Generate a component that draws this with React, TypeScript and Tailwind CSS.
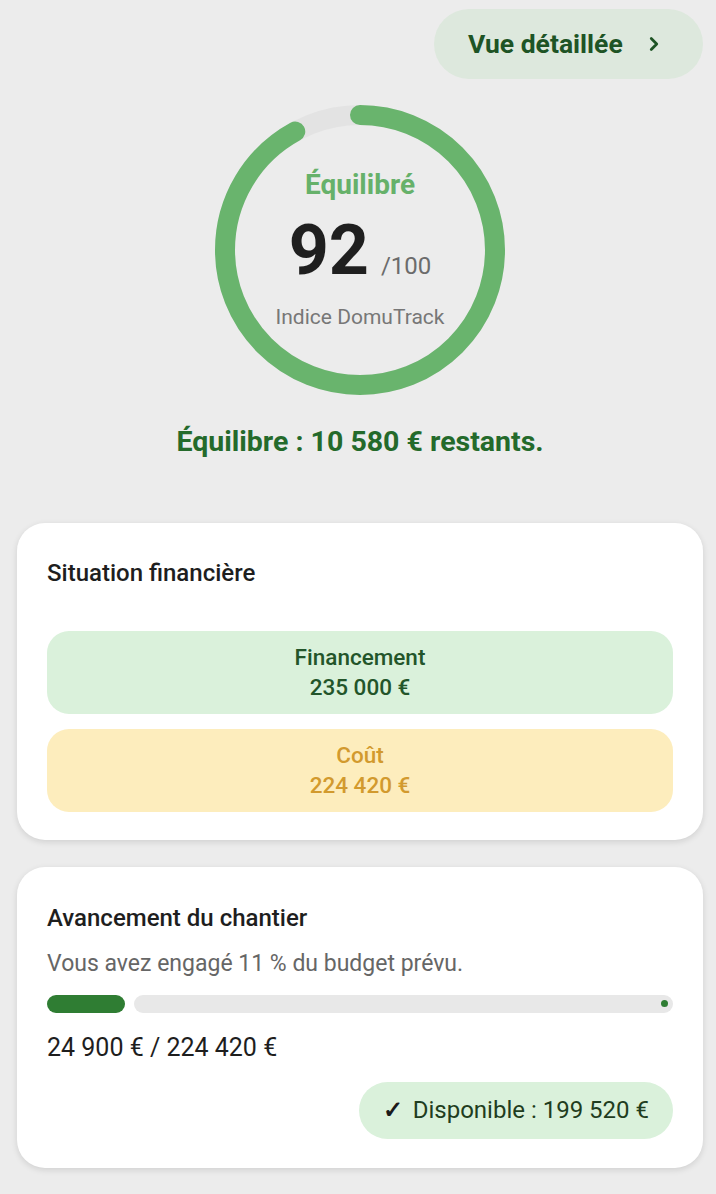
import React from 'react';

const font = { fontFamily: 'Roboto, "Noto Sans", sans-serif' };

const ScoreRing: React.FC<{ value: number }> = ({ value }) => {
  const r = 135;
  const c = 2 * Math.PI * r;
  return (
    <div className="relative w-[290px] h-[290px]">
      <svg width="290" height="290" viewBox="0 0 290 290" className="absolute inset-0">
        <circle cx="145" cy="145" r={r} fill="none" stroke="#e3e3e3" strokeWidth="20" />
        <circle
          cx="145"
          cy="145"
          r={r}
          fill="none"
          stroke="#69b46d"
          strokeWidth="20"
          strokeLinecap="round"
          strokeDasharray={`${(c * value) / 100} ${c}`}
          transform="rotate(-90 145 145)"
        />
      </svg>
      <div className="absolute inset-0 flex flex-col items-center justify-center">
        <div className="text-[28px] font-bold text-[#66b16a] leading-none mt-[-2px]">Équilibré</div>
        <div className="flex items-baseline gap-3 mt-[16px]">
          <span className="text-[70px] font-bold text-[#1f1f1f] leading-none">92</span>
          <span className="text-[24px] text-[#6b6b6b] leading-none">/100</span>
        </div>
        <div className="text-[21px] text-[#777] leading-none mt-[22px]">Indice DomuTrack</div>
      </div>
    </div>
  );
};

export default function App() {
  return (
    <div style={font} className="min-h-[1194px] bg-[#ececec] pl-[17px] pr-[13px] pt-[9px] pb-6">
      <div className="flex justify-end">
        <button className="h-[70px] w-[269px] rounded-full bg-[#dde8dd] flex items-center pl-[34px] pr-[38px] justify-between">
          <span className="text-[26.5px] font-bold text-[#1e5425]">Vue détaillée</span>
          <svg width="22" height="22" viewBox="0 0 24 24" fill="none" stroke="#1e5425" strokeWidth="3" strokeLinecap="round" strokeLinejoin="round">
            <path d="M9 6l6 6-6 6" />
          </svg>
        </button>
      </div>

      <div className="flex justify-center mt-[26px]">
        <ScoreRing value={92} />
      </div>

      <div className="text-center text-[28.5px] font-bold text-[#246a2b] mt-[33px] leading-none">
        Équilibre : 10 580 € restants.
      </div>

      <div className="mt-[66px] bg-white rounded-[28px] shadow-[0_2px_6px_rgba(0,0,0,0.12)] px-[30px] pt-[38px] pb-[28px]">
        <div className="text-[24px] font-medium text-[#1e1e1e] leading-none">Situation financière</div>
        <div className="mt-[46px] flex flex-col gap-[15px]">
          <div className="h-[83px] rounded-[22px] bg-[#daf1db] flex flex-col items-center justify-center gap-[7px] text-[#23552a] text-[22.5px] font-medium leading-none">
            <span>Financement</span>
            <span>235 000 €</span>
          </div>
          <div className="h-[83px] rounded-[22px] bg-[#fdedbd] flex flex-col items-center justify-center gap-[7px] text-[#d29a2e] text-[22.5px] font-medium leading-none">
            <span>Coût</span>
            <span>224 420 €</span>
          </div>
        </div>
      </div>

      <div className="mt-[27px] bg-white rounded-[28px] shadow-[0_2px_6px_rgba(0,0,0,0.12)] px-[30px] pt-[39px] pb-[29px]">
        <div className="text-[24px] font-medium text-[#1e1e1e] leading-none">Avancement du chantier</div>
        <div className="mt-[22px] text-[23px] text-[#666] leading-none">Vous avez engagé 11 % du budget prévu.</div>
        <div className="mt-[20px] flex items-center gap-[9px] h-[18px]">
          <div className="h-[18px] w-[78px] rounded-full bg-[#2f7d33]" />
          <div className="flex-1 h-[18px] rounded-full bg-[#e8e8e8] flex items-center justify-end pr-[5px]">
            <div className="w-[7px] h-[7px] rounded-full bg-[#2f7d33]" />
          </div>
        </div>
        <div className="mt-[22px] text-[25px] text-[#1e1e1e] leading-none">24 900 € / 224 420 €</div>
        <div className="flex justify-end mt-[22px]">
          <div className="h-[57px] rounded-full bg-[#daf1db] flex items-center pl-[24px] pr-[24px] gap-[10px] text-[24px] text-[#1f3d20]">
            <span className="text-[#1a1a1a] font-bold">✓</span>
            <span>Disponible : 199 520 €</span>
          </div>
        </div>
      </div>
    </div>
  );
}
